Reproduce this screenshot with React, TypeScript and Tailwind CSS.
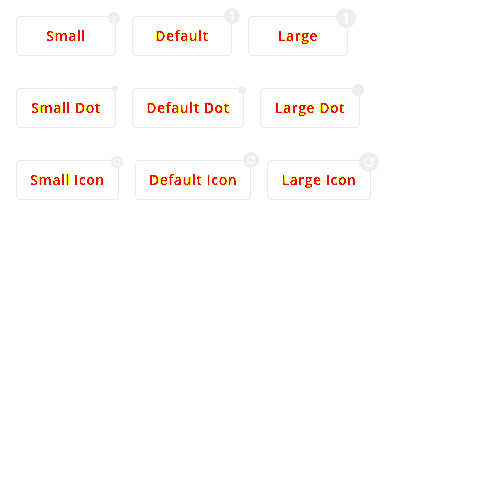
import { MdRefresh } from "react-icons/md";

type Kind = "count" | "dot" | "icon";
type Item = { label: string; width: string; badge: string; kind: Kind; icon?: string };

const rows: Item[][] = [
  [
    { label: "Small", width: "w-[100px]", kind: "count", badge: "left-[92px] -top-1 size-3 text-[9px]" },
    { label: "Default", width: "w-[100px]", kind: "count", badge: "left-[92px] -top-2 size-4 text-xs" },
    { label: "Large", width: "w-[100px]", kind: "count", badge: "left-[88px] -top-2 size-5 text-sm" },
  ],
  [
    { label: "Small Dot", width: "w-[100px]", kind: "dot", badge: "left-[96px] -top-0.5 size-1.5" },
    { label: "Default Dot", width: "w-[112px]", kind: "dot", badge: "left-[106px] -top-0.5 size-2" },
    { label: "Large Dot", width: "w-[100px]", kind: "dot", badge: "left-[92px] -top-1 size-3" },
  ],
  [
    { label: "Small Icon", width: "w-[103px]", kind: "icon", badge: "left-[95px] -top-1 size-3", icon: "size-2.5" },
    { label: "Default Icon", width: "w-[116px]", kind: "icon", badge: "left-[108px] -top-2 size-4", icon: "size-3" },
    { label: "Large Icon", width: "w-[104px]", kind: "icon", badge: "left-[92px] -top-2 size-5", icon: "size-3.5" },
  ],
];

function BadgeButton({ item }: { item: Item }) {
  return (
    <div className={`relative h-10 shrink-0 ${item.width}`}>
      <button className="flex h-full w-full items-center justify-center rounded border border-[#ebebeb] bg-white">
        <span className="whitespace-nowrap text-sm font-semibold tracking-[0.5px] text-black [filter:url(#two-tone)]">
          {item.label}
        </span>
      </button>
      <span className={`absolute flex items-center justify-center rounded-full bg-[#eeeeee] leading-none font-semibold text-white ${item.badge}`}>
        {item.kind === "count" && "1"}
        {item.kind === "icon" && <MdRefresh className={item.icon} />}
      </span>
    </div>
  );
}

export default function App() {
  return (
    <main className="flex h-[500px] w-[500px] flex-col gap-8 bg-white p-4 font-['Open_Sans',sans-serif]">
      {/* Soft edge pixels turn yellow, solid strokes turn red. */}
      <svg className="absolute size-0" aria-hidden="true">
        <filter id="two-tone" colorInterpolationFilters="sRGB">
          <feColorMatrix values="0 0 0 0 1  0 0 0 1 0  0 0 0 0 0  0 0 0 1 0" />
          <feComponentTransfer>
            <feFuncG type="discrete" tableValues="1 1 1 1 1 0 0 0 0 0" />
            <feFuncA type="discrete" tableValues="0 0 1 1 1 1 1 1 1 1" />
          </feComponentTransfer>
        </filter>
      </svg>
      {rows.map((row, i) => (
        <div key={i} className="flex gap-4">
          {row.map((item) => <BadgeButton key={item.label} item={item} />)}
        </div>
      ))}
    </main>
  );
}
